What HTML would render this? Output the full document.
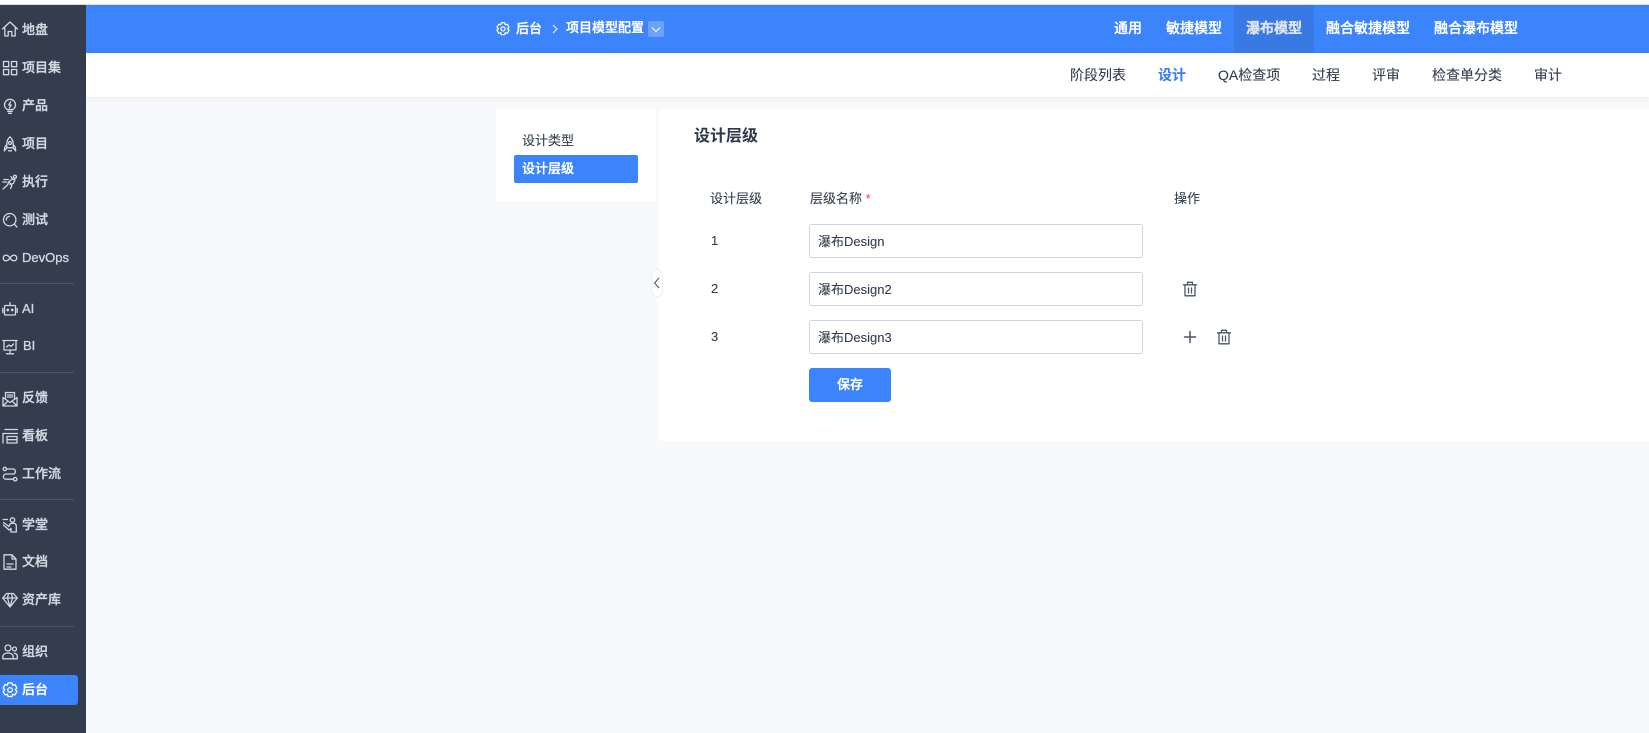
<!DOCTYPE html>
<html lang="zh-CN">
<head>
<meta charset="utf-8">
<title>设计层级</title>
<style>
*{box-sizing:border-box;margin:0;padding:0}
html,body{width:1649px;height:733px;overflow:hidden;background:#f8f9fb;font-family:"Liberation Sans","Noto Sans CJK SC",sans-serif;font-size:13px;color:#333d4e}
.a{position:absolute;white-space:nowrap}
.b{-webkit-text-stroke:.3px currentColor}
#top{left:0;top:0;width:1649px;height:5px;background:#fff;border-bottom:1px solid #dedede}
#side{left:0;top:5px;width:86px;height:728px;background:#333d4e}
.si{position:absolute;left:22px;height:20px;line-height:20px;font-size:13px;font-weight:500;color:#d3d9e2;white-space:nowrap;-webkit-text-stroke:.3px currentColor}
.ic{position:absolute;left:1.500px;width:16px;height:16px;fill:none;stroke:#d3d9e2;stroke-width:1.300;stroke-linecap:round;stroke-linejoin:round}
.dv{position:absolute;left:0;width:74px;height:1px;background:#4a5363}
#act{left:0;top:675px;width:78px;height:30px;background:#3b84fb;border-radius:0 3px 3px 0}
#hd{left:86px;top:5px;width:1563px;height:48px;background:#3b84fb}
.ht{position:absolute;top:18px;height:20px;line-height:20px;font-size:14px;font-weight:500;color:#fff;white-space:nowrap;-webkit-text-stroke:.3px currentColor}
#sub{left:86px;top:53px;width:1563px;height:44px;background:#fff;box-shadow:0 2px 6px rgba(30,40,60,.05)}
.st{position:absolute;top:65px;height:20px;line-height:20px;font-size:14px;color:#333d4e;white-space:nowrap;-webkit-text-stroke:.1px currentColor}
#lp{left:496px;top:109px;width:160px;height:92px;background:#fff}
#ct{left:658px;top:109px;width:991px;height:332px;background:#fff;border-radius:4px 0 0 4px}
.inp{position:absolute;left:809px;width:334px;height:34px;background:#fff;border:1px solid #cfd3e6;border-radius:3px;padding-left:8px;line-height:34px;font-size:13px;color:#333d4e;white-space:nowrap;-webkit-text-stroke:.1px currentColor}
.lb{position:absolute;font-size:13px;line-height:20px;height:20px;color:#333d4e;white-space:nowrap;-webkit-text-stroke:.1px currentColor}
.tr{position:absolute;width:16px;height:16px;fill:none;stroke:#4b5567;stroke-width:1.300;stroke-linecap:round;stroke-linejoin:round}
</style>
</head>
<body>
<div class="a" id="top"></div>
<div class="a" id="side"></div>
<div class="a" id="act"></div>

<svg class="ic" style="top:21px" viewBox="0 0 16 16"><path d="M.5 8 8 1l7.500 7M2.800 6.500V15h3.400v-4.500h3.600V15h3.400V6.500"/></svg>
<div class="si" style="top:20px">地盘</div>
<svg class="ic" style="top:60px" viewBox="0 0 16 16"><rect x="1.500" y="1.500" width="5.200" height="5.200"/><rect x="9.500" y="1.500" width="5.200" height="5.200"/><rect x="1.500" y="9.500" width="5.200" height="5.200"/><rect x="9.500" y="9.500" width="5.200" height="5.200"/></svg>
<div class="si" style="top:58px">项目集</div>
<svg class="ic" style="top:98px" viewBox="0 0 16 16"><path d="M5.200 11.500C3.600 10.500 2.500 8.800 2.500 6.800a5.500 5.500 0 0 1 11 0c0 2-1.100 3.700-2.700 4.700zM5.700 13.300h4.600M6.500 15.300h3"/><path d="M8.600 3.800 6.700 7h2.500L7.400 9.800"/></svg>
<div class="si" style="top:96px">产品</div>
<svg class="ic" style="top:136px" viewBox="0 0 16 16"><path d="M8 .8c2.200 2 3.200 4.300 3.200 7v4H4.800v-4c0-2.700 1-5 3.200-7zM4.800 8.500 2.800 11l-.5 4 2.500-3.200M11.200 8.500l2 2.500.5 4-2.500-3.200M6.500 14.800h3"/><circle cx="8" cy="7" r="1.500"/></svg>
<div class="si" style="top:134px">项目</div>
<svg class="ic" style="top:174px" viewBox="0 0 16 16"><path d="M1 15 5.500 11l1.500-3.500 3.500-2.500 2.500 1-1.800 3.500-3.200 1M10.500 5l-1.500-2.500M.8 8h4M1.800 5.500h4.500M7.500 8.500l2.500 3-1.500 3"/><circle cx="13" cy="2.800" r="1.500"/></svg>
<div class="si" style="top:172px">执行</div>
<svg class="ic" style="top:212px" viewBox="0 0 16 16"><circle cx="7.700" cy="7.700" r="6.200"/><path d="M12.300 12.200 15 15M4.300 8a3.500 3.500 0 0 1 3-3.700"/></svg>
<div class="si" style="top:210px">测试</div>
<svg class="ic" style="top:250px" viewBox="0 0 16 16"><path d="M8 8C6.800 6.200 5.600 5.200 4 5.200a2.800 2.800 0 0 0 0 5.600c1.600 0 2.800-1 4-2.800zm0 0c1.200-1.800 2.400-2.800 4-2.800a2.800 2.800 0 0 1 0 5.600c-1.600 0-2.800-1-4-2.800z"/></svg>
<div class="si" style="top:248px">DevOps</div>
<div class="dv" style="top:283px"></div>

<svg class="ic" style="top:301px" viewBox="0 0 16 16"><rect x="2.500" y="4.500" width="11" height="9.500" rx="1"/><path d="M8 4.500V1.500M.8 7.500v4M15.200 7.500v4"/><circle cx="5.800" cy="9" r=".7" fill="#d3d9e2"/><circle cx="10.200" cy="9" r=".7" fill="#d3d9e2"/></svg>
<div class="si" style="top:299px">AI</div>
<svg class="ic" style="top:339px" viewBox="0 0 16 16"><path d="M.8 1.500h14.400M2 1.500V11h12V1.500M8 11v2.500M4.500 14.800h7M4.500 8l2.500-2 2 1.500 2.500-2.500"/></svg>
<div class="si" style="top:336px;left:23px">BI</div>
<div class="dv" style="top:372px"></div>

<svg class="ic" style="top:391px" viewBox="0 0 16 16"><path d="M3.500 7V1.500h9V7M1 6.500V15h14V6.500M1 6.500l7 5 7-5M1 15l5-5M15 15l-5-5M5.500 4h5M5.500 6h5"/></svg>
<div class="si" style="top:388px">反馈</div>
<svg class="ic" style="top:428px" viewBox="0 0 16 16"><path d="M3 1.500h12.500M1 5.500h14.500M1 5.500V15M5 8.500h10V15H5zM5 11.700h10"/></svg>
<div class="si" style="top:426px">看板</div>
<svg class="ic" style="top:466px" viewBox="0 0 16 16"><circle cx="2.800" cy="3" r="1.700"/><circle cx="13.200" cy="13.200" r="1.700"/><path d="M4.500 3H12a3 3 0 0 1 0 5H4a2.600 2.600 0 0 0 0 5.200h7.500"/></svg>
<div class="si" style="top:464px">工作流</div>
<div class="dv" style="top:499px"></div>

<svg class="ic" style="top:517px" viewBox="0 0 16 16"><circle cx="10.500" cy="3" r="2.200"/><path d="M1 2.500h4.500M1.500 5.500 7 9.500l1-2.500c1-1 4-1 5.300-.2.800.5 1 1.500 1 2.500V15H9v-3.500l-2 1.500-5.500-5"/></svg>
<div class="si" style="top:515px">学堂</div>
<svg class="ic" style="top:554px" viewBox="0 0 16 16"><path d="M2 .8h8l4 4.200V15.200H2zM10 .8V5h4M5 10h6M5 13h4"/></svg>
<div class="si" style="top:552px">文档</div>
<svg class="ic" style="top:592px" viewBox="0 0 16 16"><path d="M4.500 1.500h7L15.300 6 8 15 .7 6zM.7 6h14.600M5.500 6 8 15l2.500-9M5.500 6 6.500 1.500M10.500 6 9.500 1.500"/></svg>
<div class="si" style="top:590px">资产库</div>
<div class="dv" style="top:626px"></div>

<svg class="ic" style="top:644px" viewBox="0 0 16 16"><circle cx="6" cy="4" r="3"/><path d="M.8 14.800V13c0-2.500 2.200-4 5.200-4s5.200 1.500 5.200 4v1.800z"/><circle cx="12.500" cy="5" r="2"/><path d="M12.500 9.300c1.800.2 2.800 1.400 2.800 3v2.500h-4"/></svg>
<div class="si" style="top:642px">组织</div>
<svg class="ic" style="top:682px;stroke:#fff" viewBox="0 0 16 16"><path d="M6 .9h4l.6 2.300 2.300-.7 2 3.500-1.700 1.700 1.700 1.700-2 3.500-2.300-.7-.6 2.300H6l-.6-2.300-2.300.7-2-3.500L2.800 7.700 1.100 6l2-3.500 2.300.7z"/><circle cx="8" cy="7.900" r="2.300"/></svg>
<div class="si" style="top:680px;color:#fff">后台</div>

<div class="a" id="hd"></div>
<div class="a" style="left:1234px;top:5px;width:80px;height:48px;background:#3879e4"></div>
<svg class="a" style="left:496px;top:22px;width:14px;height:14px;fill:none;stroke:#fff;stroke-width:1.400;stroke-linejoin:round" viewBox="0 0 16 16"><path d="M6 .9h4l.6 2.300 2.300-.7 2 3.500-1.700 1.700 1.700 1.700-2 3.500-2.300-.7-.6 2.300H6l-.6-2.300-2.300.7-2-3.500L2.800 7.700 1.100 6l2-3.500 2.300.7z"/><circle cx="8" cy="7.900" r="2.300"/></svg>
<div class="a b" style="left:516px;top:19px;height:20px;line-height:20px;font-weight:500;color:#fff">后台</div>
<svg class="a" style="left:551px;top:24px;width:8px;height:10px;fill:none;stroke:#cfe0fd;stroke-width:1.400" viewBox="0 0 8 10"><path d="M2 1l4 4-4 4"/></svg>
<div class="a b" style="left:566px;top:18px;height:20px;line-height:20px;font-weight:500;color:#fff">项目模型配置</div>
<div class="a" style="left:648px;top:21px;width:16px;height:16px;background:#6aa2fc;border-radius:2px"></div>
<svg class="a" style="left:651px;top:24px;width:10px;height:10px;fill:none;stroke:#fff;stroke-width:1.100" viewBox="0 0 10 10"><path d="M1 3.500l4 4 4-4"/></svg>

<div class="ht" style="left:1114px">通用</div>
<div class="ht" style="left:1166px">敏捷模型</div>
<div class="ht" style="left:1246px;color:#dfe4ee;-webkit-text-stroke:.6px #dfe4ee">瀑布模型</div>
<div class="ht" style="left:1326px">融合敏捷模型</div>
<div class="ht" style="left:1434px">融合瀑布模型</div>

<div class="a" id="sub"></div>
<div class="st" style="left:1070px">阶段列表</div>
<div class="st" style="left:1158px;color:#3b7cf0;font-weight:700">设计</div>
<div class="st" style="left:1218px">QA检查项</div>
<div class="st" style="left:1312px">过程</div>
<div class="st" style="left:1372px">评审</div>
<div class="st" style="left:1432px">检查单分类</div>
<div class="st" style="left:1534px">审计</div>

<div class="a" id="lp"></div>
<div class="a" id="ct"></div>
<div class="lb" style="left:522px;top:131px">设计类型</div>
<div class="a" style="left:514px;top:155px;width:124px;height:28px;background:#3b84fb;border-radius:2px"></div>
<div class="lb b" style="left:522px;top:159px;color:#fff;font-weight:500;-webkit-text-stroke:.3px #fff">设计层级</div>
<div class="a" style="left:651px;top:269px;width:12px;height:28px;background:#fff;border:1px solid #eceef2;border-radius:6px"></div>
<svg class="a" style="left:653px;top:277px;width:8px;height:12px;fill:none;stroke:#4b5567;stroke-width:1" viewBox="0 0 8 12"><path d="M6 1 1.500 6 6 11"/></svg>

<div class="a" style="left:694px;top:126px;height:22px;line-height:22px;font-size:16px;font-weight:700;color:#2f3848">设计层级</div>
<div class="lb" style="left:710px;top:189px">设计层级</div>
<div class="lb" style="left:810px;top:189px">层级名称 <span style="color:#f0505a">*</span></div>
<div class="lb" style="left:1174px;top:189px">操作</div>

<div class="lb" style="left:711px;top:231px">1</div>
<div class="inp" style="top:224px">瀑布Design</div>
<div class="lb" style="left:711px;top:279px">2</div>
<div class="inp" style="top:272px">瀑布Design2</div>
<svg class="tr" style="left:1182px;top:281px" viewBox="0 0 16 16"><path d="M1.500 3.800h13M5.500 3.500V1.300h5v2.200M3 3.800V14.800h10V3.800M6.500 7v5M9.500 7v5"/></svg>
<div class="lb" style="left:711px;top:327px">3</div>
<div class="inp" style="top:320px">瀑布Design3</div>
<svg class="tr" style="left:1182px;top:329px" viewBox="0 0 16 16"><path d="M8 2.500v11M2.500 8h11" stroke-width="1.500"/></svg>
<svg class="tr" style="left:1216px;top:329px" viewBox="0 0 16 16"><path d="M1.500 3.800h13M5.500 3.500V1.300h5v2.200M3 3.800V14.800h10V3.800M6.500 7v5M9.500 7v5"/></svg>

<div class="a b" style="left:809px;top:368px;width:82px;height:34px;background:#3b84fb;border-radius:3px;color:#fff;font-weight:500;text-align:center;line-height:34px">保存</div>
</body>
</html>
